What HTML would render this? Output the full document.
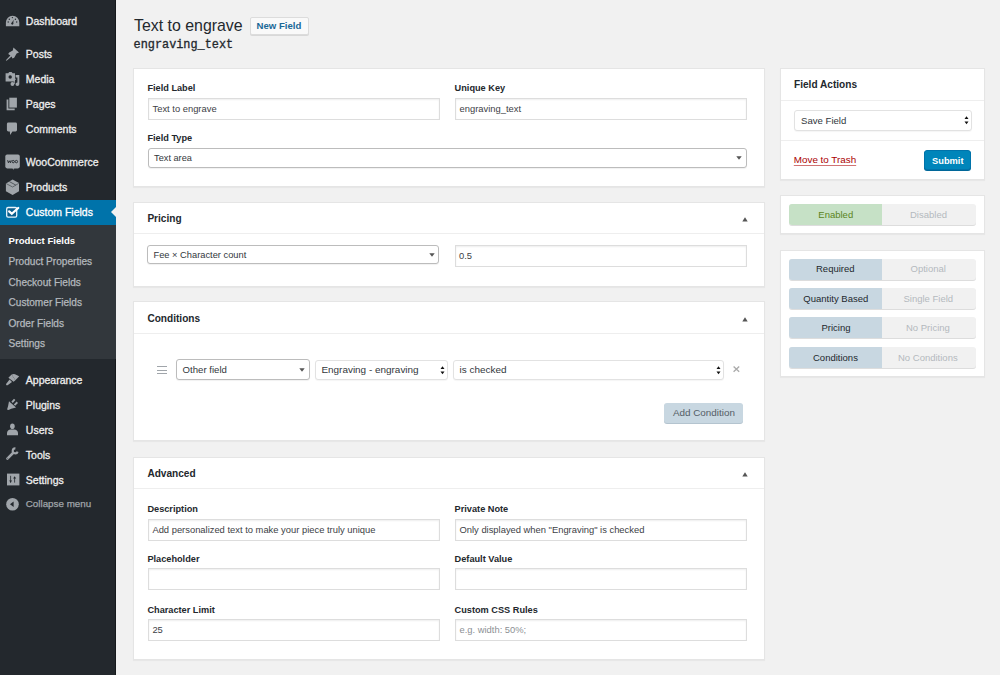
<!DOCTYPE html>
<html><head><meta charset="utf-8"><title>Custom Fields</title>
<style>
html,body{margin:0;padding:0;width:1000px;height:675px;overflow:hidden;background:#f1f1f1;font-family:"Liberation Sans",sans-serif}
.b{position:absolute}
.t{position:absolute;white-space:pre}
</style></head><body>
<div class="b" style="left:0px;top:0px;width:116px;height:675px;background:#23282d;border-right:1px solid #16191c;box-sizing:border-box"></div>
<div class="b" style="left:0px;top:199.5px;width:116px;height:25.5px;background:#0073aa"></div>
<div class="b" style="left:0px;top:225px;width:116px;height:133.7px;background:#32373c"></div>
<div class="b" style="left:110.6px;top:205.8px;width:0;height:0;border-top:6.3px solid transparent;border-bottom:6.3px solid transparent;border-right:6px solid #f1f1f1"></div>
<div class="t" style="left:25.80px;top:16.31px;font-size:10.5px;line-height:10.5px;font-weight:400;color:#eeeeee;font-family:'Liberation Sans',sans-serif;-webkit-text-stroke:0.3px #eeeeee">Dashboard</div>
<div class="t" style="left:25.80px;top:48.91px;font-size:10.5px;line-height:10.5px;font-weight:400;color:#eeeeee;font-family:'Liberation Sans',sans-serif;-webkit-text-stroke:0.3px #eeeeee">Posts</div>
<div class="t" style="left:25.80px;top:74.21px;font-size:10.5px;line-height:10.5px;font-weight:400;color:#eeeeee;font-family:'Liberation Sans',sans-serif;-webkit-text-stroke:0.3px #eeeeee">Media</div>
<div class="t" style="left:25.80px;top:99.31px;font-size:10.5px;line-height:10.5px;font-weight:400;color:#eeeeee;font-family:'Liberation Sans',sans-serif;-webkit-text-stroke:0.3px #eeeeee">Pages</div>
<div class="t" style="left:25.80px;top:124.11px;font-size:10.5px;line-height:10.5px;font-weight:400;color:#eeeeee;font-family:'Liberation Sans',sans-serif;-webkit-text-stroke:0.3px #eeeeee">Comments</div>
<div class="t" style="left:25.80px;top:157.41px;font-size:10.5px;line-height:10.5px;font-weight:400;color:#eeeeee;font-family:'Liberation Sans',sans-serif;-webkit-text-stroke:0.3px #eeeeee">WooCommerce</div>
<div class="t" style="left:25.80px;top:182.11px;font-size:10.5px;line-height:10.5px;font-weight:400;color:#eeeeee;font-family:'Liberation Sans',sans-serif;-webkit-text-stroke:0.3px #eeeeee">Products</div>
<div class="t" style="left:25.80px;top:206.91px;font-size:10.5px;line-height:10.5px;font-weight:400;color:#ffffff;font-family:'Liberation Sans',sans-serif;-webkit-text-stroke:0.3px #ffffff">Custom Fields</div>
<div class="t" style="left:25.80px;top:374.51px;font-size:10.5px;line-height:10.5px;font-weight:400;color:#eeeeee;font-family:'Liberation Sans',sans-serif;-webkit-text-stroke:0.3px #eeeeee">Appearance</div>
<div class="t" style="left:25.80px;top:399.71px;font-size:10.5px;line-height:10.5px;font-weight:400;color:#eeeeee;font-family:'Liberation Sans',sans-serif;-webkit-text-stroke:0.3px #eeeeee">Plugins</div>
<div class="t" style="left:25.80px;top:424.71px;font-size:10.5px;line-height:10.5px;font-weight:400;color:#eeeeee;font-family:'Liberation Sans',sans-serif;-webkit-text-stroke:0.3px #eeeeee">Users</div>
<div class="t" style="left:25.80px;top:449.71px;font-size:10.5px;line-height:10.5px;font-weight:400;color:#eeeeee;font-family:'Liberation Sans',sans-serif;-webkit-text-stroke:0.3px #eeeeee">Tools</div>
<div class="t" style="left:25.80px;top:474.71px;font-size:10.5px;line-height:10.5px;font-weight:400;color:#eeeeee;font-family:'Liberation Sans',sans-serif;-webkit-text-stroke:0.3px #eeeeee">Settings</div>
<div class="t" style="left:25.80px;top:499.30px;font-size:9.8px;line-height:9.8px;font-weight:400;color:#a0a5aa;font-family:'Liberation Sans',sans-serif;-webkit-text-stroke:0.25px #a0a5aa">Collapse menu</div>
<div class="t" style="left:8.50px;top:235.77px;font-size:9.6px;line-height:9.6px;font-weight:700;color:#ffffff;font-family:'Liberation Sans',sans-serif;">Product Fields</div>
<div class="t" style="left:8.50px;top:257.05px;font-size:10.1px;line-height:10.1px;font-weight:400;color:#b4b9be;font-family:'Liberation Sans',sans-serif;-webkit-text-stroke:0.25px #b4b9be">Product Properties</div>
<div class="t" style="left:8.50px;top:277.85px;font-size:10.1px;line-height:10.1px;font-weight:400;color:#b4b9be;font-family:'Liberation Sans',sans-serif;-webkit-text-stroke:0.25px #b4b9be">Checkout Fields</div>
<div class="t" style="left:8.50px;top:298.45px;font-size:10.1px;line-height:10.1px;font-weight:400;color:#b4b9be;font-family:'Liberation Sans',sans-serif;-webkit-text-stroke:0.25px #b4b9be">Customer Fields</div>
<div class="t" style="left:8.50px;top:319.05px;font-size:10.1px;line-height:10.1px;font-weight:400;color:#b4b9be;font-family:'Liberation Sans',sans-serif;-webkit-text-stroke:0.25px #b4b9be">Order Fields</div>
<div class="t" style="left:8.50px;top:339.45px;font-size:10.1px;line-height:10.1px;font-weight:400;color:#b4b9be;font-family:'Liberation Sans',sans-serif;-webkit-text-stroke:0.25px #b4b9be">Settings</div>
<svg class="b" style="left:2px;top:10px" width="22" height="22" viewBox="0 0 22 22"><path d="M3.9 16.3 L3.9 12.6 A6.7 6.9 0 0 1 17.3 12.6 L17.3 16.3 Z" fill="#a0a5aa"/><circle cx="10.4" cy="7.6" r="0.7" fill="#23282d"/><circle cx="7.3" cy="9.2" r="0.7" fill="#23282d"/><circle cx="13.4" cy="9.2" r="0.7" fill="#23282d"/><circle cx="6.2" cy="12" r="0.7" fill="#23282d"/><circle cx="14.7" cy="12" r="0.7" fill="#23282d"/><path d="M9.4 13.6 L11.6 9.8 L11.2 13.8 Z" fill="#23282d"/><circle cx="10.3" cy="13.6" r="1.1" fill="#23282d"/></svg>
<svg class="b" style="left:2px;top:43px" width="22" height="22" viewBox="0 0 22 22"><path d="M11.4 4.6 L17 9.4 L14.6 10.6 L12.2 14.8 L10.4 15.6 L9.6 13.6 L4.6 17.8 L3.8 17.2 L8.4 12.4 L6.2 11 L7.2 9.6 L10.8 7.6 Z" fill="#a0a5aa"/></svg>
<svg class="b" style="left:2px;top:68px" width="22" height="22" viewBox="0 0 22 22"><path d="M3.6 5.2 L6.2 5.2 L7.2 3.9 L9.6 3.9 L10.6 5.2 L13 5.2 L13 13.4 L3.6 13.4 Z" fill="#a0a5aa"/><circle cx="8.2" cy="9" r="1.7" fill="#23282d"/><path d="M13.6 7 L17.3 7 L17.3 16.2 A1.9 1.8 0 1 1 15.4 14.4 L15.4 9.6 L13.6 9.6 Z" fill="#a0a5aa"/><ellipse cx="10.4" cy="16" rx="1.9" ry="1.9" fill="#a0a5aa"/><path d="M12.3 16 L12.3 11.2 L14 11.2" stroke="#a0a5aa" stroke-width="0.9" fill="none"/></svg>
<svg class="b" style="left:2px;top:93px" width="22" height="22" viewBox="0 0 22 22"><rect x="7.3" y="4.7" width="7.6" height="9.9" fill="#a0a5aa"/><path d="M4.6 6.5 L6.4 6.5 L6.4 15.5 L12.7 15.5 L12.7 17.2 L4.6 17.2 Z" fill="#a0a5aa"/></svg>
<svg class="b" style="left:2px;top:118px" width="22" height="22" viewBox="0 0 22 22"><path d="M6.4 4.6 L13.6 4.6 Q15 4.6 15 6 L15 12 Q15 13.4 13.6 13.4 L10.4 13.4 L8.2 16.9 L7.8 13.4 L6.4 13.4 Q4.9 13.4 4.9 12 L4.9 6 Q4.9 4.6 6.4 4.6 Z" fill="#a0a5aa"/></svg>
<svg class="b" style="left:2px;top:151px" width="22" height="22" viewBox="0 0 22 22"><rect x="3.3" y="3.6" width="14.5" height="13.8" rx="1.8" fill="#a0a5aa"/><path d="M10.3 17.3 L11.5 18.8 L12.3 17.3 Z" fill="#a0a5aa"/><path d="M5.6 9.2 L6.4 11.8 L7.4 9.8 L8.4 11.8 L9.2 9.2" stroke="#23282d" stroke-width="0.9" fill="none"/><circle cx="11.2" cy="10.6" r="1.2" stroke="#23282d" stroke-width="0.9" fill="none"/><circle cx="14.4" cy="10.6" r="1.2" stroke="#23282d" stroke-width="0.9" fill="none"/></svg>
<svg class="b" style="left:2px;top:176px" width="22" height="22" viewBox="0 0 22 22"><path d="M10.6 3.6 L17 7.1 L17 15.3 L10.6 19.1 L3.9 15.3 L3.9 7.4 Z" fill="#a0a5aa"/><path d="M4.2 7.6 L10.6 11 L16.8 7.3" stroke="#23282d" stroke-width="0.5" fill="none"/><path d="M7.4 5.6 L13.8 9.1" stroke="#23282d" stroke-width="0.6" fill="none"/></svg>
<svg class="b" style="left:2px;top:201px" width="22" height="22" viewBox="0 0 22 22"><rect x="4.7" y="6.5" width="10" height="9.6" rx="1.4" stroke="#e8f4fb" stroke-width="1.3" fill="#0a5f8e"/><path d="M7.2 10.4 L9.8 12.8 L16.2 7" stroke="#ffffff" stroke-width="2.3" fill="none" stroke-linecap="round"/></svg>
<svg class="b" style="left:2px;top:368px" width="22" height="22" viewBox="0 0 22 22"><path d="M9.6 6.6 Q11.5 5.6 13 6.2 Q15 7 17.2 8.2 L13.4 12.2 Z" fill="#a0a5aa"/><path d="M6.4 9.8 L9.6 6.6 L13.4 12.2 L11.6 13.8 Z" fill="#a0a5aa"/><path d="M7.6 11.6 L10 14 L5.6 17.2 Q4.6 17.6 4.2 17 Q3.8 16.4 4.4 15.6 Z" fill="#a0a5aa"/></svg>
<svg class="b" style="left:2px;top:393px" width="22" height="22" viewBox="0 0 22 22"><path d="M7 8.2 L14 14.6 L9.2 15.8 L6.6 17 L5 16.6 L5.6 14.8 L6.2 12.4 Z" fill="#a0a5aa"/><path d="M9.4 8.6 L12 5.8 L13.4 7.1 L10.8 9.9 Z M11.8 11.4 L14.6 8.6 L16 9.9 L13.2 12.7 Z" fill="#a0a5aa"/></svg>
<svg class="b" style="left:2px;top:418px" width="22" height="22" viewBox="0 0 22 22"><ellipse cx="10.4" cy="8.3" rx="2.3" ry="2.8" fill="#a0a5aa"/><path d="M5 17.2 L5 14.8 Q5.4 11.6 8.6 11.4 L12.2 11.4 Q15.6 11.6 16 14.8 L16 17.2 Z" fill="#a0a5aa"/></svg>
<svg class="b" style="left:2px;top:443px" width="22" height="22" viewBox="0 0 22 22"><path d="M5.4 15.6 L11 10" stroke="#a0a5aa" stroke-width="2.5" stroke-linecap="round"/><path d="M15.6 8.6 A2.5 2.5 0 1 1 13.4 5.4" stroke="#a0a5aa" stroke-width="2.1" fill="none"/><circle cx="5.8" cy="15.2" r="0.45" fill="#23282d"/></svg>
<svg class="b" style="left:2px;top:468px" width="22" height="22" viewBox="0 0 22 22"><rect x="5" y="5.6" width="12.4" height="11.8" fill="#a0a5aa"/><path d="M8.6 7.8 L8.6 14.8 M12.6 9.8 L12.6 14.6" stroke="#23282d" stroke-width="0.8"/><path d="M7.1 12.6 L10.1 12.6 L8.6 14.4 Z" fill="#23282d"/><path d="M11.1 10.6 L14.1 10.6 L12.6 8.3 Z" fill="#23282d"/></svg>
<svg class="b" style="left:2px;top:493px" width="22" height="22" viewBox="0 0 22 22"><circle cx="10.5" cy="11.3" r="6.3" fill="#a0a5aa"/><path d="M8 11.3 L11.6 8.6 L11.6 14 Z" fill="#23282d"/></svg>
<div class="b" style="left:116px;top:0px;width:884px;height:675px;background:#f1f1f1"></div>
<div class="t" style="left:134.00px;top:17.74px;font-size:15.9px;line-height:15.9px;font-weight:400;color:#23282d;font-family:'Liberation Sans',sans-serif;">Text to engrave</div>
<div class="b" style="left:250px;top:16.5px;width:58.5px;height:18.3px;background:#f9f9f9;border:1px solid #dcdcdc;border-radius:2px;box-sizing:border-box;box-shadow:0 1px 0 #d8d8d8"></div>
<div class="t" style="left:256.60px;top:21.47px;font-size:9.6px;line-height:9.6px;font-weight:700;color:#1a6897;font-family:'Liberation Sans',sans-serif;">New Field</div>
<div class="t" style="left:133.60px;top:40.27px;font-size:11.85px;line-height:11.85px;font-weight:400;color:#23282d;font-family:'Liberation Mono',sans-serif;-webkit-text-stroke:0.3px #23282d">engraving_text</div>
<div class="b" style="left:133px;top:67.5px;width:632px;height:119px;background:#fff;border:1px solid #e5e5e5;box-sizing:border-box;box-shadow:0 1px 1px rgba(0,0,0,.04)"></div>
<div class="t" style="left:147.40px;top:84.21px;font-size:9.2px;line-height:9.2px;font-weight:700;color:#23282d;font-family:'Liberation Sans',sans-serif;">Field Label</div>
<div class="b" style="left:148px;top:98.3px;width:292px;height:21.3px;background:#fff;border:1px solid #ddd;box-sizing:border-box;box-shadow:inset 0 1px 2px rgba(0,0,0,.07)"></div>
<div class="t" style="left:152.50px;top:103.84px;font-size:9.4px;line-height:9.4px;font-weight:400;color:#3d4146;font-family:'Liberation Sans',sans-serif;">Text to engrave</div>
<div class="t" style="left:454.60px;top:84.21px;font-size:9.2px;line-height:9.2px;font-weight:700;color:#23282d;font-family:'Liberation Sans',sans-serif;">Unique Key</div>
<div class="b" style="left:455px;top:98.3px;width:292px;height:21.3px;background:#fff;border:1px solid #ddd;box-sizing:border-box;box-shadow:inset 0 1px 2px rgba(0,0,0,.07)"></div>
<div class="t" style="left:459.50px;top:103.84px;font-size:9.4px;line-height:9.4px;font-weight:400;color:#3d4146;font-family:'Liberation Sans',sans-serif;">engraving_text</div>
<div class="t" style="left:147.40px;top:134.21px;font-size:9.2px;line-height:9.2px;font-weight:700;color:#23282d;font-family:'Liberation Sans',sans-serif;">Field Type</div>
<div class="b" style="left:147.5px;top:147.6px;width:599px;height:20.4px;background:#fff;border:1px solid #bcbcbc;border-radius:3px;box-sizing:border-box;box-shadow:0 1px 1px rgba(0,0,0,.06)"></div>
<svg class="b" style="left:736.1px;top:155.99999999999997px" width="6" height="4" viewBox="0 0 60 40"><path d="M3 3 L57 3 L30 38 Z" fill="#555"/></svg>
<div class="t" style="left:154.10px;top:153.81px;font-size:9.2px;line-height:9.2px;font-weight:400;color:#32373c;font-family:'Liberation Sans',sans-serif;">Text area</div>
<div class="b" style="left:133px;top:201.5px;width:632px;height:85px;background:#fff;border:1px solid #e5e5e5;box-sizing:border-box;box-shadow:0 1px 1px rgba(0,0,0,.04)"></div>
<div class="t" style="left:147.40px;top:214.15px;font-size:10.1px;line-height:10.1px;font-weight:700;color:#23282d;font-family:'Liberation Sans',sans-serif;">Pricing</div>
<div class="b" style="left:134px;top:233px;width:630px;height:1px;background:#eee"></div>
<svg class="b" style="left:742.4px;top:217.2px" width="6" height="5" viewBox="0 0 60 50"><path d="M30 2 L57 46 L3 46 Z" fill="#555"/></svg>
<div class="b" style="left:147.3px;top:244.6px;width:292px;height:19.8px;background:#fff;border:1px solid #bcbcbc;border-radius:3px;box-sizing:border-box;box-shadow:0 1px 1px rgba(0,0,0,.06)"></div>
<svg class="b" style="left:428.90000000000003px;top:252.7px" width="6" height="4" viewBox="0 0 60 40"><path d="M3 3 L57 3 L30 38 Z" fill="#555"/></svg>
<div class="t" style="left:153.50px;top:251.13px;font-size:9.3px;line-height:9.3px;font-weight:400;color:#32373c;font-family:'Liberation Sans',sans-serif;">Fee × Character count</div>
<div class="b" style="left:455px;top:245px;width:292px;height:22px;background:#fff;border:1px solid #ddd;box-sizing:border-box;box-shadow:inset 0 1px 2px rgba(0,0,0,.07)"></div>
<div class="t" style="left:459.00px;top:250.64px;font-size:9.4px;line-height:9.4px;font-weight:400;color:#3d4146;font-family:'Liberation Sans',sans-serif;">0.5</div>
<div class="b" style="left:133px;top:301px;width:632px;height:140px;background:#fff;border:1px solid #e5e5e5;box-sizing:border-box;box-shadow:0 1px 1px rgba(0,0,0,.04)"></div>
<div class="t" style="left:147.40px;top:314.15px;font-size:10.1px;line-height:10.1px;font-weight:700;color:#23282d;font-family:'Liberation Sans',sans-serif;">Conditions</div>
<div class="b" style="left:134px;top:333px;width:630px;height:1px;background:#eee"></div>
<svg class="b" style="left:742.4px;top:317.2px" width="6" height="5" viewBox="0 0 60 50"><path d="M30 2 L57 46 L3 46 Z" fill="#555"/></svg>
<div class="b" style="left:156.5px;top:366px;width:10.5px;height:1px;background:#a0a5aa"></div>
<div class="b" style="left:156.5px;top:369.5px;width:10.5px;height:1px;background:#a0a5aa"></div>
<div class="b" style="left:156.5px;top:373px;width:10.5px;height:1px;background:#a0a5aa"></div>
<div class="b" style="left:175.6px;top:359.4px;width:134px;height:20.2px;background:#fff;border:1px solid #bcbcbc;border-radius:3px;box-sizing:border-box;box-shadow:0 1px 1px rgba(0,0,0,.06)"></div>
<svg class="b" style="left:299.20000000000005px;top:367.7px" width="6" height="4" viewBox="0 0 60 40"><path d="M3 3 L57 3 L30 38 Z" fill="#555"/></svg>
<div class="t" style="left:182.60px;top:365.27px;font-size:9.6px;line-height:9.6px;font-weight:400;color:#32373c;font-family:'Liberation Sans',sans-serif;">Other field</div>
<div class="b" style="left:314.6px;top:360px;width:133.9px;height:19.5px;background:#fff;border:1px solid #e2e2e2;border-radius:3px;box-sizing:border-box;box-shadow:0 1px 1px rgba(0,0,0,.04)"></div>
<svg class="b" style="left:440.1px;top:365.55px" width="5" height="9" viewBox="0 0 50 90"><path d="M25 3 L45 30 L5 30 Z M25 83 L45 55 L5 55 Z" fill="#111"/></svg>
<div class="t" style="left:321.40px;top:364.88px;font-size:9.95px;line-height:9.95px;font-weight:400;color:#32373c;font-family:'Liberation Sans',sans-serif;">Engraving - engraving</div>
<div class="b" style="left:452.8px;top:360px;width:271.7px;height:19.6px;background:#fff;border:1px solid #e2e2e2;border-radius:3px;box-sizing:border-box;box-shadow:0 1px 1px rgba(0,0,0,.04)"></div>
<svg class="b" style="left:716.1px;top:365.6px" width="5" height="9" viewBox="0 0 50 90"><path d="M25 3 L45 30 L5 30 Z M25 83 L45 55 L5 55 Z" fill="#111"/></svg>
<div class="t" style="left:459.50px;top:364.88px;font-size:9.95px;line-height:9.95px;font-weight:400;color:#32373c;font-family:'Liberation Sans',sans-serif;">is checked</div>
<svg class="b" style="left:733px;top:366px" width="7" height="6.5" viewBox="0 0 70 65"><path d="M6 6 L62 58 M62 6 L6 58" stroke="#aaa" stroke-width="13"/></svg>
<div class="b" style="left:664.3px;top:402.6px;width:79.2px;height:20.2px;background:#c8d7e1;border-radius:3px;box-shadow:0 1px 0 #b4c4cf"></div>
<div class="t" style="left:672.90px;top:408.12px;font-size:9.9px;line-height:9.9px;font-weight:400;color:#555d66;font-family:'Liberation Sans',sans-serif;">Add Condition</div>
<div class="b" style="left:133px;top:457px;width:632px;height:203px;background:#fff;border:1px solid #e5e5e5;box-sizing:border-box;box-shadow:0 1px 1px rgba(0,0,0,.04)"></div>
<div class="t" style="left:147.40px;top:469.15px;font-size:10.1px;line-height:10.1px;font-weight:700;color:#23282d;font-family:'Liberation Sans',sans-serif;">Advanced</div>
<div class="b" style="left:134px;top:488px;width:630px;height:1px;background:#eee"></div>
<svg class="b" style="left:742.4px;top:472.2px" width="6" height="5" viewBox="0 0 60 50"><path d="M30 2 L57 46 L3 46 Z" fill="#555"/></svg>
<div class="t" style="left:147.40px;top:505.21px;font-size:9.2px;line-height:9.2px;font-weight:700;color:#23282d;font-family:'Liberation Sans',sans-serif;">Description</div>
<div class="b" style="left:147.8px;top:518.5px;width:292px;height:22px;background:#fff;border:1px solid #ddd;box-sizing:border-box;box-shadow:inset 0 1px 2px rgba(0,0,0,.07)"></div>
<div class="t" style="left:152.40px;top:524.64px;font-size:9.4px;line-height:9.4px;font-weight:400;color:#3d4146;font-family:'Liberation Sans',sans-serif;">Add personalized text to make your piece truly unique</div>
<div class="t" style="left:454.60px;top:505.21px;font-size:9.2px;line-height:9.2px;font-weight:700;color:#23282d;font-family:'Liberation Sans',sans-serif;">Private Note</div>
<div class="b" style="left:455px;top:518.5px;width:292px;height:22px;background:#fff;border:1px solid #ddd;box-sizing:border-box;box-shadow:inset 0 1px 2px rgba(0,0,0,.07)"></div>
<div class="t" style="left:459.50px;top:524.64px;font-size:9.4px;line-height:9.4px;font-weight:400;color:#3d4146;font-family:'Liberation Sans',sans-serif;">Only displayed when "Engraving" is checked</div>
<div class="t" style="left:147.40px;top:555.21px;font-size:9.2px;line-height:9.2px;font-weight:700;color:#23282d;font-family:'Liberation Sans',sans-serif;">Placeholder</div>
<div class="b" style="left:147.8px;top:568.0px;width:292px;height:22px;background:#fff;border:1px solid #ddd;box-sizing:border-box;box-shadow:inset 0 1px 2px rgba(0,0,0,.07)"></div>
<div class="t" style="left:454.60px;top:555.21px;font-size:9.2px;line-height:9.2px;font-weight:700;color:#23282d;font-family:'Liberation Sans',sans-serif;">Default Value</div>
<div class="b" style="left:455px;top:568.0px;width:292px;height:22px;background:#fff;border:1px solid #ddd;box-sizing:border-box;box-shadow:inset 0 1px 2px rgba(0,0,0,.07)"></div>
<div class="t" style="left:147.40px;top:605.61px;font-size:9.2px;line-height:9.2px;font-weight:700;color:#23282d;font-family:'Liberation Sans',sans-serif;">Character Limit</div>
<div class="b" style="left:147.8px;top:618.7px;width:292px;height:22px;background:#fff;border:1px solid #ddd;box-sizing:border-box;box-shadow:inset 0 1px 2px rgba(0,0,0,.07)"></div>
<div class="t" style="left:152.40px;top:624.84px;font-size:9.4px;line-height:9.4px;font-weight:400;color:#3d4146;font-family:'Liberation Sans',sans-serif;">25</div>
<div class="t" style="left:454.60px;top:605.61px;font-size:9.2px;line-height:9.2px;font-weight:700;color:#23282d;font-family:'Liberation Sans',sans-serif;">Custom CSS Rules</div>
<div class="b" style="left:455px;top:618.7px;width:292px;height:22px;background:#fff;border:1px solid #ddd;box-sizing:border-box;box-shadow:inset 0 1px 2px rgba(0,0,0,.07)"></div>
<div class="t" style="left:459.50px;top:624.84px;font-size:9.4px;line-height:9.4px;font-weight:400;color:#8c8f94;font-family:'Liberation Sans',sans-serif;">e.g. width: 50%;</div>
<div class="b" style="left:779.8px;top:67.7px;width:205px;height:112.5px;background:#fff;border:1px solid #e5e5e5;box-sizing:border-box;box-shadow:0 1px 1px rgba(0,0,0,.04)"></div>
<div class="t" style="left:794.00px;top:79.65px;font-size:10.1px;line-height:10.1px;font-weight:700;color:#23282d;font-family:'Liberation Sans',sans-serif;">Field Actions</div>
<div class="b" style="left:780.8px;top:100px;width:203px;height:1px;background:#eee"></div>
<div class="b" style="left:794px;top:110.3px;width:178px;height:20.3px;background:#fff;border:1px solid #e2e2e2;border-radius:3px;box-sizing:border-box;box-shadow:0 1px 1px rgba(0,0,0,.04)"></div>
<svg class="b" style="left:963.6px;top:116.25px" width="5" height="9" viewBox="0 0 50 90"><path d="M25 3 L45 30 L5 30 Z M25 83 L45 55 L5 55 Z" fill="#111"/></svg>
<div class="t" style="left:801.00px;top:116.47px;font-size:9.6px;line-height:9.6px;font-weight:400;color:#32373c;font-family:'Liberation Sans',sans-serif;">Save Field</div>
<div class="b" style="left:780.8px;top:140.3px;width:203px;height:1px;background:#eee"></div>
<div class="t" style="left:793.80px;top:155.26px;font-size:9.85px;line-height:9.85px;font-weight:400;color:#a00;font-family:'Liberation Sans',sans-serif;text-decoration:underline;text-decoration-thickness:1px;text-decoration-color:rgba(170,0,0,.55);text-underline-offset:2px">Move to Trash</div>
<div class="b" style="left:923.8px;top:150.1px;width:47px;height:20.3px;background:#0085ba;border:1px solid #0073aa;border-radius:3px;box-sizing:border-box;box-shadow:0 1px 0 #006799"></div>
<div class="t" style="left:932.00px;top:156.53px;font-size:9.3px;line-height:9.3px;font-weight:700;color:#fff;font-family:'Liberation Sans',sans-serif;">Submit</div>
<div class="b" style="left:779.8px;top:195.2px;width:205px;height:38.5px;background:#fff;border:1px solid #e5e5e5;box-sizing:border-box;box-shadow:0 1px 1px rgba(0,0,0,.04)"></div>
<div class="b" style="left:788.9px;top:204.3px;width:187px;height:21.2px;background:#f1f1f1;border-radius:3px;box-shadow:0 1px 0 #ddd;overflow:hidden"><div style="position:absolute;left:0;top:0;width:93.1px;height:100%;background:#c6e1c6"></div></div>
<div class="t" style="left:818.30px;top:210.26px;font-size:9.5px;line-height:9.5px;font-weight:400;color:#5b841b;font-family:'Liberation Sans',sans-serif;">Enabled</div>
<div class="t" style="left:910.00px;top:210.26px;font-size:9.5px;line-height:9.5px;font-weight:400;color:#b4b9be;font-family:'Liberation Sans',sans-serif;">Disabled</div>
<div class="b" style="left:779.8px;top:249.8px;width:205px;height:127.5px;background:#fff;border:1px solid #e5e5e5;box-sizing:border-box;box-shadow:0 1px 1px rgba(0,0,0,.04)"></div>
<div class="b" style="left:788.9px;top:258.5px;width:187px;height:21.2px;background:#f1f1f1;border-radius:3px;box-shadow:0 1px 0 #ddd;overflow:hidden"><div style="position:absolute;left:0;top:0;width:93.1px;height:100%;background:#c8d7e1"></div></div>
<div class="t" style="left:816.00px;top:264.46px;font-size:9.5px;line-height:9.5px;font-weight:400;color:#23282d;font-family:'Liberation Sans',sans-serif;">Required</div>
<div class="t" style="left:910.50px;top:264.46px;font-size:9.5px;line-height:9.5px;font-weight:400;color:#b4b9be;font-family:'Liberation Sans',sans-serif;">Optional</div>
<div class="b" style="left:788.9px;top:288.0px;width:187px;height:21.2px;background:#f1f1f1;border-radius:3px;box-shadow:0 1px 0 #ddd;overflow:hidden"><div style="position:absolute;left:0;top:0;width:93.1px;height:100%;background:#c8d7e1"></div></div>
<div class="t" style="left:803.30px;top:293.96px;font-size:9.5px;line-height:9.5px;font-weight:400;color:#23282d;font-family:'Liberation Sans',sans-serif;">Quantity Based</div>
<div class="t" style="left:903.50px;top:293.96px;font-size:9.5px;line-height:9.5px;font-weight:400;color:#b4b9be;font-family:'Liberation Sans',sans-serif;">Single Field</div>
<div class="b" style="left:788.9px;top:317.3px;width:187px;height:21.2px;background:#f1f1f1;border-radius:3px;box-shadow:0 1px 0 #ddd;overflow:hidden"><div style="position:absolute;left:0;top:0;width:93.1px;height:100%;background:#c8d7e1"></div></div>
<div class="t" style="left:821.50px;top:323.26px;font-size:9.5px;line-height:9.5px;font-weight:400;color:#23282d;font-family:'Liberation Sans',sans-serif;">Pricing</div>
<div class="t" style="left:906.00px;top:323.26px;font-size:9.5px;line-height:9.5px;font-weight:400;color:#b4b9be;font-family:'Liberation Sans',sans-serif;">No Pricing</div>
<div class="b" style="left:788.9px;top:346.6px;width:187px;height:21.2px;background:#f1f1f1;border-radius:3px;box-shadow:0 1px 0 #ddd;overflow:hidden"><div style="position:absolute;left:0;top:0;width:93.1px;height:100%;background:#c8d7e1"></div></div>
<div class="t" style="left:813.00px;top:352.56px;font-size:9.5px;line-height:9.5px;font-weight:400;color:#23282d;font-family:'Liberation Sans',sans-serif;">Conditions</div>
<div class="t" style="left:898.00px;top:352.56px;font-size:9.5px;line-height:9.5px;font-weight:400;color:#b4b9be;font-family:'Liberation Sans',sans-serif;">No Conditions</div>
</body></html>
